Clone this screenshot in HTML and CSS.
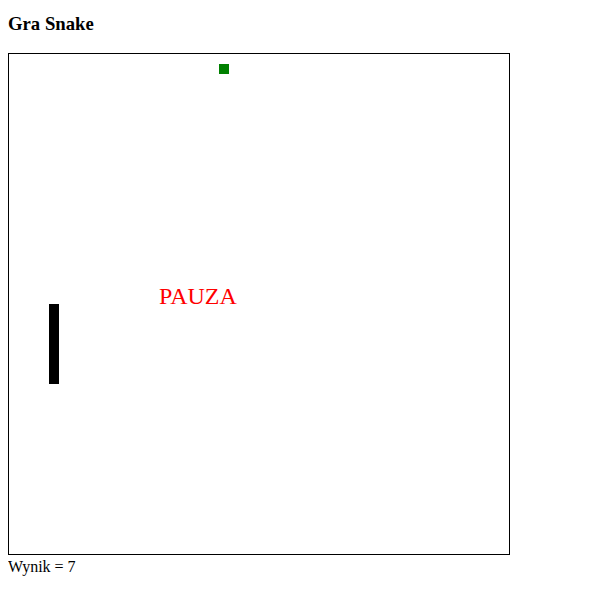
FILE: index.html
```html
<!DOCTYPE html>
<html>
<head>
<meta charset="UTF-8">
<title>Gra Snake</title>
<link rel="stylesheet" href="styles.css">
</head>
<body>
<h3 class="title">Gra Snake</h3>
<div class="board">
  <div class="food"></div>
  <div class="snake"></div>
  <div class="pause">PAUZA</div>
</div>
<p class="score">Wynik = 7</p>
</body>
</html>
```
FILE: styles.css
```css
body{ margin:8px; font-family:"Liberation Serif", "Times New Roman", serif; color:#000; background:#fff; }
.title{ font-size:18.72px; margin:5px 0 19px 0; line-height:21px; }
.board{ position:relative; width:500px; height:500px; border:1px solid #000; }
.food{ position:absolute; left:210px; top:10px; width:10px; height:10px; background:#008000; }
.snake{ position:absolute; left:40px; top:250px; width:10px; height:80px; background:#000; }
.pause{ position:absolute; left:150px; top:230px; font-size:24px; line-height:24px; color:#f00; }
.score{ margin:3px 0 0 0; font-size:16px; }
```
